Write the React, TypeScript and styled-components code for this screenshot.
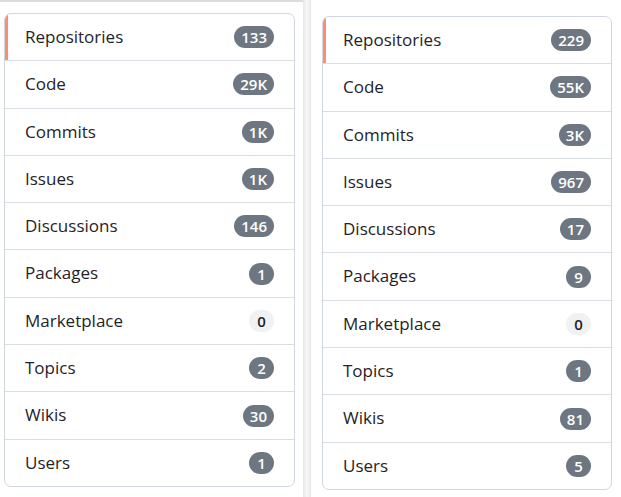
import React from "react";
import styled, { createGlobalStyle } from "styled-components";

interface NavItem {
  label: string;
  count: string;
}

const leftItems: NavItem[] = [
  { label: "Repositories", count: "133" },
  { label: "Code", count: "29K" },
  { label: "Commits", count: "1K" },
  { label: "Issues", count: "1K" },
  { label: "Discussions", count: "146" },
  { label: "Packages", count: "1" },
  { label: "Marketplace", count: "0" },
  { label: "Topics", count: "2" },
  { label: "Wikis", count: "30" },
  { label: "Users", count: "1" },
];

const rightItems: NavItem[] = [
  { label: "Repositories", count: "229" },
  { label: "Code", count: "55K" },
  { label: "Commits", count: "3K" },
  { label: "Issues", count: "967" },
  { label: "Discussions", count: "17" },
  { label: "Packages", count: "9" },
  { label: "Marketplace", count: "0" },
  { label: "Topics", count: "1" },
  { label: "Wikis", count: "81" },
  { label: "Users", count: "5" },
];

const GlobalStyle = createGlobalStyle`
  html, body {
    margin: 0;
    padding: 0;
    background: #fff;
  }
  body {
    font-family: "Open Sans", "Noto Sans", "Liberation Sans", sans-serif;
    color: #1f2328;
  }
`;

const SearchMenu = ({ items }: { items: NavItem[] }) => (
  <Menu>
    {items.map((item, i) => (
      <MenuItem key={item.label} selected={i === 0}>
        <span>{item.label}</span>
        <Counter empty={item.count === "0"}>{item.count}</Counter>
      </MenuItem>
    ))}
  </Menu>
);

const App = () => (
  <Page>
    <GlobalStyle />
    <LeftPane>
      <SearchMenu items={leftItems} />
    </LeftPane>
    <Splitter />
    <RightPane>
      <SearchMenu items={rightItems} />
    </RightPane>
  </Page>
);

const Page = styled.div`
  display: flex;
  width: 621px;
  height: 497px;
  overflow: hidden;
`;

const LeftPane = styled.div`
  width: 303px;
  box-sizing: border-box;
  border-top: 2px solid #dcdcdc;
  padding: 11px 8px 0 4px;
`;

/* drag handle between the two result panes */
const Splitter = styled.div`
  width: 8px;
  flex-shrink: 0;
  background: linear-gradient(
    to right,
    #e6e6e6 0%,
    #f6f6f6 45%,
    #f3f3f3 70%,
    #e4e4e4 100%
  );
`;

const RightPane = styled.div`
  flex: 1;
  box-sizing: border-box;
  padding: 16px 9px 0 11px;
`;

const Menu = styled.nav`
  border: 1px solid #d0d7de;
  border-radius: 7px;
  overflow: hidden;
  background: #fff;
`;

const MenuItem = styled.div<{ selected?: boolean }>`
  position: relative;
  display: flex;
  align-items: center;
  justify-content: space-between;
  padding: 10px 20px;
  font-size: 17px;
  line-height: 26.3px;
  border-bottom: 1px solid #d8dee4;

  &:last-child {
    border-bottom: none;
  }

  &::before {
    content: "";
    display: ${(p) => (p.selected ? "block" : "none")};
    position: absolute;
    left: 0;
    top: 0;
    bottom: 0;
    width: 3px;
    background: #fd8c73;
  }
`;

const Counter = styled.span<{ empty?: boolean }>`
  display: inline-block;
  box-sizing: border-box;
  min-width: 25px;
  height: 22px;
  padding: 0 7px;
  border-radius: 11px;
  font-size: 15px;
  font-weight: 600;
  line-height: 22px;
  text-align: center;
  background: ${(p) => (p.empty ? "#eff1f3" : "#6e7781")};
  color: ${(p) => (p.empty ? "#1f2328" : "#fff")};
`;

export default App;
